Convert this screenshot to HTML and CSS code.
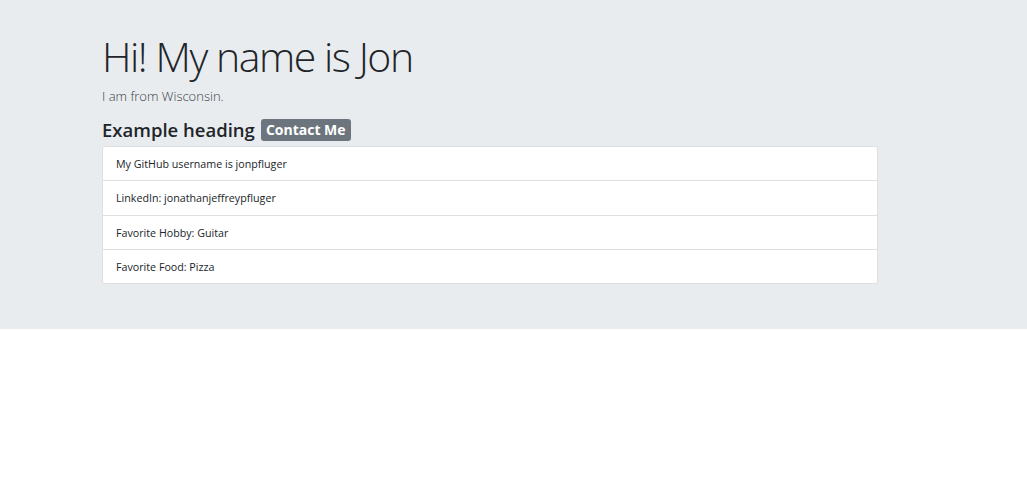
FILE: index.html
```html
<!DOCTYPE html>
<html lang="en">
<head>
<meta charset="utf-8">
<title>Jon</title>
<link rel="stylesheet" href="styles.css">
</head>
<body>
<div class="jumbotron">
  <div class="container">
    <h1 class="display">Hi! My name is Jon</h1>
    <p class="lead">I am from Wisconsin.</p>
    <h4 class="subhead">Example heading <span class="badge">Contact Me</span></h4>
    <ul class="list-group">
      <li class="list-item">My GitHub username is jonpfluger</li>
      <li class="list-item">LinkedIn: jonathanjeffreypfluger</li>
      <li class="list-item">Favorite Hobby: Guitar</li>
      <li class="list-item">Favorite Food: Pizza</li>
    </ul>
  </div>
</div>
</body>
</html>
```
FILE: styles.css
```css
* { box-sizing: border-box; }
html, body { margin: 0; padding: 0; }
body {
  font-family: "Open Sans", "Noto Sans", sans-serif;
  color: #212529;
  background: #fff;
}
.jumbotron {
  background: #e9ecef;
  padding: 28px 0 45px;
}
.container {
  width: 776px;
  margin-left: 102px;
}
.display {
  margin: 0;
  font-size: 41px;
  font-weight: 300;
  line-height: 56px;
  letter-spacing: -1.45px;
}
.lead {
  margin: 2px 0 0;
  font-size: 13px;
  font-weight: 300;
  line-height: 20px;
  color: #3a3f44;
}
.subhead {
  margin: 11px 0 0;
  font-size: 18.5px;
  font-weight: 600;
  line-height: 26px;
  display: flex;
  align-items: center;
  gap: 6px;
}
.badge {
  background: #6c757d;
  color: #fff;
  font-size: 14px;
  font-weight: 700;
  padding: 1px 5px;
  border-radius: 3px;
  line-height: 20px;
}
.list-group {
  list-style: none;
  margin: 3px 0 0;
  padding: 0;
  background: #fff;
  border: 1px solid #dfdfdf;
  border-radius: 3px;
}
.list-item {
  font-size: 10.7px;
  line-height: 16px;
  padding: 9px 13px;
  border-top: 1px solid #dfdfdf;
  height: 34.3px;
}
.list-item:first-child { border-top: 0; height: 33.3px; }
```
